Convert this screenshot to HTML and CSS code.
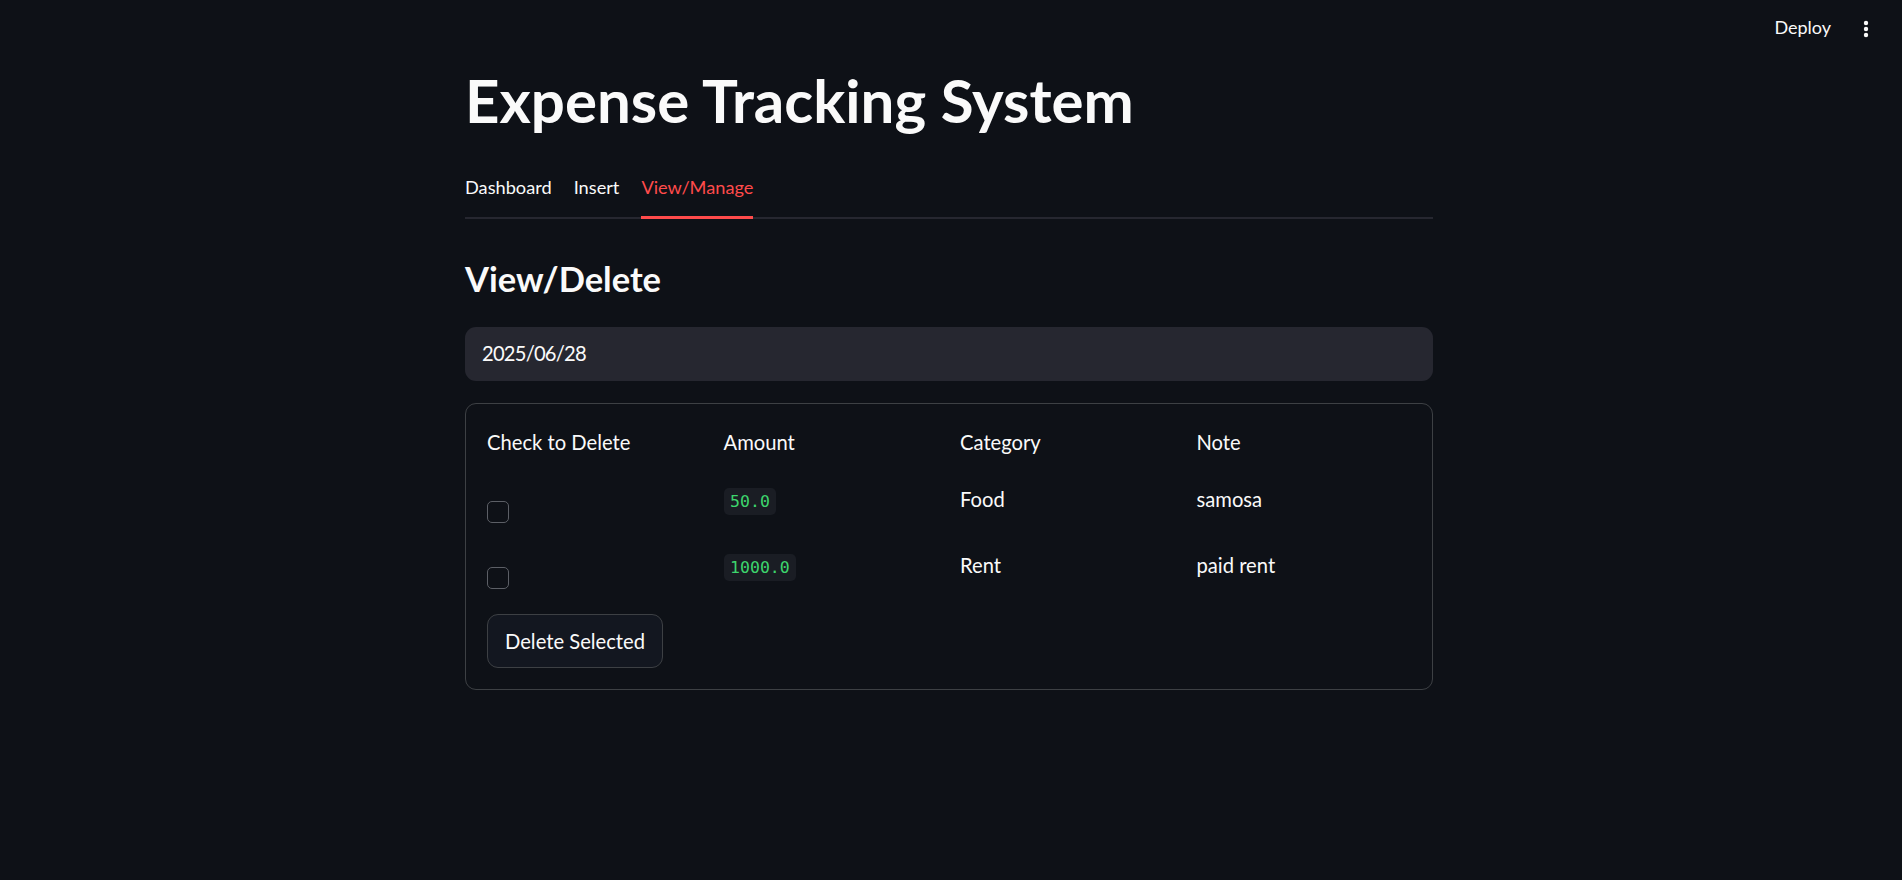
FILE: index.html
```html
<!DOCTYPE html>
<html lang="en">
<head>
<meta charset="utf-8">
<title>Expense Tracking System</title>
<link rel="stylesheet" href="styles.css">
</head>
<body>
<header class="topbar">
  <span class="deploy">Deploy</span>
  <svg class="menu" width="6" height="18" viewBox="0 0 6 18" aria-hidden="true">
    <circle cx="3" cy="3" r="2.2" fill="#fafafa"/>
    <circle cx="3" cy="9" r="2.2" fill="#fafafa"/>
    <circle cx="3" cy="15" r="2.2" fill="#fafafa"/>
  </svg>
</header>
<main class="block">
  <h1 class="title">Expense Tracking System</h1>
  <nav class="tabs">
    <span class="tab">Dashboard</span>
    <span class="tab">Insert</span>
    <span class="tab tab-active">View/Manage</span>
  </nav>
  <h3 class="subheader">View/Delete</h3>
  <div class="date-input">2025/06/28</div>
  <section class="panel">
    <div class="table">
      <div class="cell head">Check to Delete</div>
      <div class="cell head">Amount</div>
      <div class="cell head">Category</div>
      <div class="cell head">Note</div>

      <div class="cell"><span class="checkbox"></span></div>
      <div class="cell"><code class="amount">50.0</code></div>
      <div class="cell text">Food</div>
      <div class="cell text">samosa</div>

      <div class="cell"><span class="checkbox"></span></div>
      <div class="cell"><code class="amount">1000.0</code></div>
      <div class="cell text">Rent</div>
      <div class="cell text">paid rent</div>
    </div>
    <button class="btn" type="button">Delete Selected</button>
  </section>
</main>
</body>
</html>
```
FILE: styles.css
```css
html, body {
  margin: 0;
  padding: 0;
  background: #0e1117;
  color: #fafafa;
  font-family: Lato, "Noto Sans", sans-serif;
}

.topbar {
  box-sizing: border-box;
  height: 64px;
  padding: 17px 33px 0 0;
  display: flex;
  justify-content: flex-end;
  align-items: flex-start;
  gap: 32px;
}

.deploy {
  font-size: 18px;
  line-height: 1.2;
  color: #fafafa;
}

.menu {
  margin-top: 3px;
}

.block {
  width: 968px;
  margin: 0 auto;
  padding-right: 4px;
}

.title {
  margin: 0;
  font-size: 60px;
  line-height: 72.6px;
  font-weight: 700;
  color: #fafafa;
}

.tabs {
  margin-top: 35.4px;
  display: flex;
  gap: 22px;
  border-bottom: 2px solid #262730;
}

.tab {
  font-size: 18.2px;
  line-height: 30.8px;
  padding-bottom: 13.2px;
  border-bottom: 3px solid transparent;
  margin-bottom: -2px;
  color: #fafafa;
}

.tab-active {
  color: #ff4b4b;
  border-bottom-color: #ff4b4b;
}

.subheader {
  margin: 37px 0 0 0;
  font-size: 34.5px;
  line-height: 46.2px;
  font-weight: 700;
}

.date-input {
  margin-top: 24.8px;
  box-sizing: border-box;
  height: 54px;
  padding: 0 17px;
  background: #262730;
  border-radius: 11px;
  font-size: 20.2px;
  letter-spacing: -0.8px;
  line-height: 52px;
}

.panel {
  margin-top: 22px;
  border: 1px solid #3d4044;
  border-radius: 11px;
  padding: 21px;
}

.table {
  display: grid;
  grid-template-columns: repeat(4, 1fr);
  grid-template-rows: 34px 44px 44px;
  column-gap: 22px;
  row-gap: 22px;
}

.cell {
  font-size: 20.2px;
  line-height: 34px;
}

.cell.text {
  line-height: 36px;
}

.checkbox {
  display: block;
  box-sizing: border-box;
  margin-top: 20px;
  width: 22px;
  height: 22px;
  border: 1px solid #5c5f66;
  border-radius: 5px;
}

.amount {
  display: inline-block;
  margin-top: 7px;
  height: 27px;
  padding: 0 6.6px;
  border-radius: 5px;
  background: #1a1d24;
  color: #3dd56d;
  font-family: "DejaVu Sans Mono", "Liberation Mono", monospace;
  font-size: 16.5px;
  line-height: 27px;
  vertical-align: top;
}

.btn {
  margin-top: 23px;
  box-sizing: border-box;
  height: 54px;
  padding: 0 17px;
  background: #131720;
  border: 1px solid #3d4044;
  border-radius: 11px;
  color: #fafafa;
  font-family: inherit;
  font-size: 20.2px;
  line-height: 52px;
  cursor: pointer;
}
```
